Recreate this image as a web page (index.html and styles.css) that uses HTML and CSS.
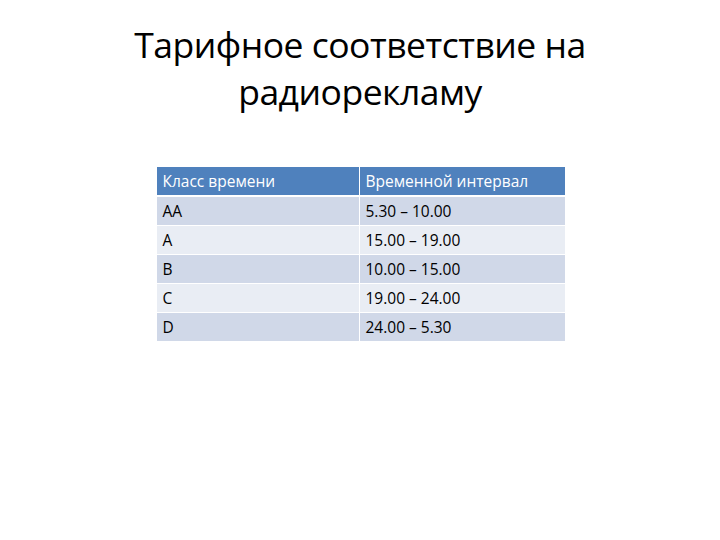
FILE: index.html
```html
<!DOCTYPE html>
<html lang="ru">
<head>
<meta charset="utf-8">
<link rel="stylesheet" href="styles.css">
</head>
<body>
<div class="slide">
  <h1 class="title">Тарифное соответствие на<br>радиорекламу</h1>
  <table class="tariff">
    <thead>
      <tr><th>Класс времени</th><th>Временной интервал</th></tr>
    </thead>
    <tbody>
      <tr class="odd"><td>АА</td><td>5.30 – 10.00</td></tr>
      <tr class="even"><td>А</td><td>15.00 – 19.00</td></tr>
      <tr class="odd"><td>B</td><td>10.00 – 15.00</td></tr>
      <tr class="even"><td>C</td><td>19.00 – 24.00</td></tr>
      <tr class="odd"><td>D</td><td>24.00 – 5.30</td></tr>
    </tbody>
  </table>
</div>
</body>
</html>
```
FILE: styles.css
```css
html, body {
  margin: 0;
  padding: 0;
  background: #ffffff;
}
.slide {
  width: 720px;
  height: 540px;
  display: flex;
  flex-direction: column;
  align-items: center;
  font-family: "Open Sans", "Noto Sans", sans-serif;
}
.title {
  margin: 21px 0 0 0;
  font-weight: 400;
  font-size: 35.5px;
  line-height: 47px;
  color: #000;
  text-align: center;
  letter-spacing: -0.5px;
}
.tariff {
  margin-top: 52px;
  margin-left: 1px;
  border-collapse: collapse;
  width: 408px;
  font-size: 15.5px;
  color: #000;
}
.tariff th, .tariff td {
  text-align: left;
  font-weight: 400;
  padding: 0 6px;
  height: 28px;
  border: 1.5px solid #fff;
  border-top: none;
  border-bottom: 1px solid #fff;
}
.tariff th:first-child, .tariff td:first-child { border-left: none; width: 190px; }
.tariff th:last-child, .tariff td:last-child { border-right: none; }
.tariff th {
  background: #4f81bd;
  color: #fff;
  border-bottom: 2px solid #fff;
}
.tariff tr.odd td { background: #d0d8e8; }
.tariff tr.even td { background: #e9edf4; }
```
